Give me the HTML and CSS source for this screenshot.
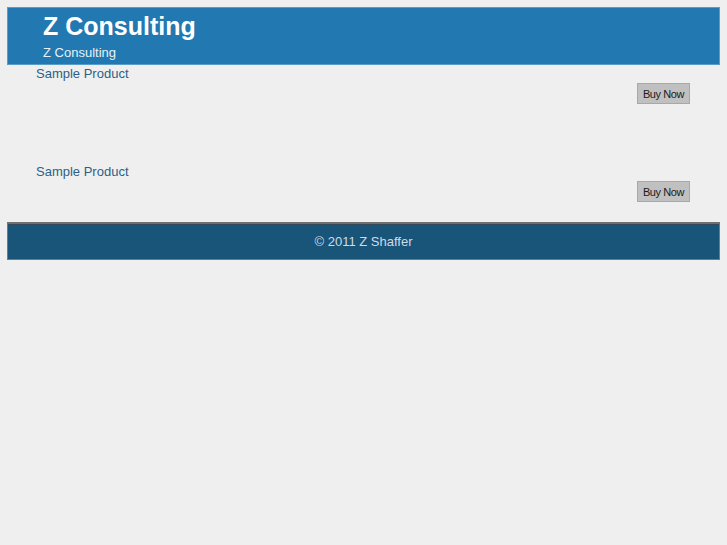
FILE: index.html
```html
<!DOCTYPE html>
<html lang="en">
<head>
    <meta charset="UTF-8">
    <meta name="viewport" content="width=device-width, initial-scale=1.0">
    <title>Z Consulting</title>
    <link rel="stylesheet" href="styles.css">
</head>
<body>
    <header class="masthead">
        <h1 class="site-title">Z Consulting</h1>
        <p class="site-tagline">Z Consulting</p>
    </header>
    <main class="products">
        <div class="product">
            <a href="#" class="product-name">Sample Product</a>
            <div class="product-buy">
                <button type="button" class="buy-button">Buy Now</button>
            </div>
        </div>
        <div class="product">
            <a href="#" class="product-name">Sample Product</a>
            <div class="product-buy">
                <button type="button" class="buy-button">Buy Now</button>
            </div>
        </div>
    </main>
    <footer class="site-footer">
        <p>&copy; 2011 Z Shaffer</p>
    </footer>
</body>
</html>
```

FILE: styles.css
```css
body {
    font-family: "Liberation Sans", Arial, sans-serif;
    background-color: #efefef;
    margin: 7px;
}

.masthead {
    background-color: #2279b1;
    border: 1px solid #5a9dca;
    padding: 3px 35px 2px;
    color: #ffffff;
}

.site-title {
    margin: 0;
    font-size: 25px;
    line-height: 30px;
    font-weight: bold;
}

.site-tagline {
    margin: 3px 0 0;
    font-size: 13px;
    line-height: 18px;
    color: #e6f0f7;
}

.products {
    padding: 1px 30px 20px 29px;
}

.product + .product {
    margin-top: 60px;
}

.product-name {
    display: block;
    font-size: 13px;
    line-height: 16px;
    color: #2c5f86;
    text-decoration: none;
}

.product-buy {
    display: flex;
    justify-content: flex-end;
    margin-top: 1px;
}

.buy-button {
    font-family: "Liberation Sans", Arial, sans-serif;
    font-size: 11px;
    letter-spacing: -0.4px;
    width: 53px;
    height: 21px;
    padding: 0;
    background-color: #c0c0c0;
    border: 1px solid #a8a8a8;
    color: #1a1a1a;
    border-radius: 0;
}

.site-footer {
    background-color: #195479;
    border: 1px solid #4c85ad;
    border-top: 2px solid #6f6f6f;
    box-shadow: inset 0 1px 0 #34495a;
    color: #cfdbe6;
    text-align: center;
}

.site-footer p {
    margin: 0;
    font-size: 13px;
    line-height: 35px;
}
```
